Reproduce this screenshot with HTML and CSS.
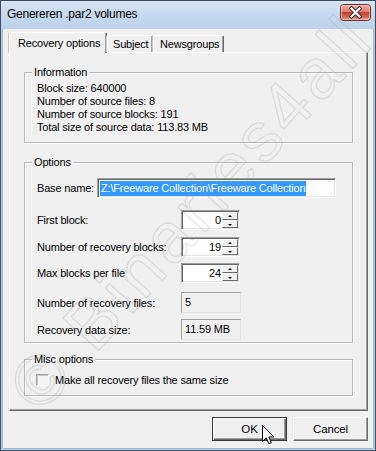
FILE: index.html
```html
<!DOCTYPE html>
<html>
<head>
<meta charset="utf-8">
<link rel="stylesheet" href="styles.css">
</head>
<body>
<div class="window">
  <div class="titlebar">
    <span class="title">Genereren .par2 volumes</span>
    <div class="close">
      <svg width="31" height="17" viewBox="0 0 31 17">
        <defs>
          <linearGradient id="cg" x1="0" y1="0" x2="0" y2="1">
            <stop offset="0" stop-color="#eab4a8"/>
            <stop offset="0.45" stop-color="#d9806f"/>
            <stop offset="0.5" stop-color="#c7402f"/>
            <stop offset="0.75" stop-color="#d2614f"/>
            <stop offset="1" stop-color="#e8a58f"/>
          </linearGradient>
        </defs>
        <rect x="0.5" y="0.5" width="30" height="16" rx="3" fill="url(#cg)" stroke="#6e2e2a"/>
        <rect x="1.5" y="1.5" width="28" height="14" rx="2" fill="none" stroke="#f3cfc6" stroke-opacity="0.7"/>
        <path d="M11.5 4.5 L19.5 12.5 M19.5 4.5 L11.5 12.5" stroke="#3b2a2e" stroke-width="4" stroke-linecap="square"/>
        <path d="M11.5 4.5 L19.5 12.5 M19.5 4.5 L11.5 12.5" stroke="#ffffff" stroke-width="2.2" stroke-linecap="square"/>
      </svg>
    </div>
  </div>
  <div class="client">
    <div class="tabs">
      <div class="tab active">Recovery options</div>
      <div class="tab tab-subject">Subject</div>
      <div class="tab tab-news">Newsgroups</div>
    </div>
    <div class="panel">
      <div class="group info">
        <span class="legend">Information</span>
        <div class="line">Block size: 640000</div>
        <div class="line">Number of source files: 8</div>
        <div class="line">Number of source blocks: 191</div>
        <div class="line">Total size of source data: 113.83 MB</div>
      </div>
      <div class="group options">
        <span class="legend">Options</span>
        <div class="row row-base">
          <span class="lbl lbl-short">Base name:</span>
          <div class="textbox"><span class="sel">Z:\Freeware Collection\Freeware Collection</span></div>
        </div>
        <div class="row row-first">
          <span class="lbl">First block:</span>
          <div class="spin"><div class="spin-val">0</div><div class="spin-btns"><div class="sb up"></div><div class="sb down"></div></div></div>
        </div>
        <div class="row row-rec">
          <span class="lbl">Number of recovery blocks:</span>
          <div class="spin"><div class="spin-val">19</div><div class="spin-btns"><div class="sb up"></div><div class="sb down"></div></div></div>
        </div>
        <div class="row row-max">
          <span class="lbl">Max blocks per file</span>
          <div class="spin"><div class="spin-val">24</div><div class="spin-btns"><div class="sb up"></div><div class="sb down"></div></div></div>
        </div>
        <div class="row row-files">
          <span class="lbl">Number of recovery files:</span>
          <div class="ro">5</div>
        </div>
        <div class="row row-size">
          <span class="lbl">Recovery data size:</span>
          <div class="ro">11.59 MB</div>
        </div>
      </div>
      <div class="group misc">
        <span class="legend">Misc options</span>
        <div class="check-row">
          <span class="checkbox"></span>
          <span>Make all recovery files the same size</span>
        </div>
      </div>
    </div>
    <div class="buttons">
      <div class="btn default">OK</div>
      <div class="btn">Cancel</div>
    </div>
  </div>
  <div class="watermark">© Binaries4all</div>
  <svg class="cursor" width="13" height="21" viewBox="0 0 13 21">
    <path d="M0.5 0.5 L0.5 16.5 L4.3 12.9 L6.8 18.8 L9.3 17.7 L6.9 12 L11.8 12 Z" fill="#fff" stroke="#000" stroke-width="1" stroke-linejoin="miter"/>
  </svg>
</div>
</body>
</html>
```

FILE: styles.css
```css
* { box-sizing: border-box; }
html, body { margin: 0; padding: 0; }
body {
  width: 376px;
  height: 451px;
  overflow: hidden;
  background: #fff;
  font-family: "Liberation Sans", Arial, sans-serif;
  font-size: 11px;
  letter-spacing: -0.17px;
  color: #000;
}
.window {
  position: relative;
  width: 376px;
  height: 451px;
  border: 1px solid #3c4c5e;
  background: linear-gradient(#c9dbef, #c0d5ec 60px, #bcd3eb);
  display: flex;
  flex-direction: column;
  overflow: hidden;
}
.titlebar {
  height: 28px;
  flex: none;
  display: flex;
  align-items: center;
  justify-content: space-between;
  padding: 0 4px 2px 6px;
  background: linear-gradient(#d6e4f3, #c6d9ee 50%, #bcd2ea);
}
.title {
  font-size: 12px;
  letter-spacing: -0.25px;
  color: #000;
}
.close {
  width: 31px;
  height: 17px;
  margin-top: -3px;
}
.close svg { display: block; }
.client {
  flex: 1;
  margin: 0 2px 2px 2px;
  background: #f0f0f0;
  padding: 3px 0 0 6px;
  box-shadow: -1px 0 0 #9eb3c8, 1px 0 0 #9eb3c8, 0 1px 0 #9eb3c8;
}
.tabs {
  display: flex;
  height: 20px;
  align-items: flex-end;
  position: relative;
  z-index: 2;
}
.tab {
  height: 17px;
  padding: 0 6px;
  display: flex;
  align-items: center;
  border: 1px solid;
  border-color: #fff #696969 transparent #fff;
  border-bottom: none;
  box-shadow: inset -1px 0 0 #a0a0a0, -1px 0 0 #c8c8c8;
  border-radius: 2px 2px 0 0;
  background: #f0f0f0;
  white-space: nowrap;
}
.tab.active {
  height: 21px;
  margin-bottom: -1px;
  width: 98px;
  padding-left: 8px;
  padding-bottom: 1px;
}
.tab-subject { width: 46px; padding-left: 5px; }
.tab-news { width: 71px; padding-left: 6px; }
.panel {
  width: 359px;
  height: 359px;
  border: 1px solid;
  border-color: #fff #696969 #696969 #fff;
  box-shadow: inset -1px -1px 0 #a0a0a0;
  padding: 19px 0 0 14px;
}
.group {
  position: relative;
  width: 329px;
  border: 1px solid #b8b8b8;
  box-shadow: inset 1px 1px 0 #fff, 1px 1px 0 #fff;
}
.legend {
  position: absolute;
  top: -8px;
  left: 7px;
  padding: 0 2px;
  background: #f0f0f0;
  line-height: 14px;
}
.info {
  height: 71px;
  padding: 9px 0 0 12px;
}
.line {
  height: 13px;
  line-height: 13px;
}
.options {
  height: 181px;
  margin-top: 19px;
  padding: 15px 0 0 12px;
}
.row {
  display: flex;
  align-items: center;
  height: 20px;
}
.row-first { margin-top: 12px; }
.row-rec { margin-top: 7px; }
.row-max { margin-top: 6px; }
.row-files { margin-top: 9px; height: 21px; }
.row-size { margin-top: 6px; height: 21px; }
.lbl {
  width: 144px;
  flex: none;
}
.lbl.lbl-short { width: 60px; }
.textbox {
  width: 239px;
  height: 20px;
  background: #fff;
  border: 1px solid;
  border-color: #a0a0a0 #fff #fff #a0a0a0;
  box-shadow: inset 1px 1px 0 #696969, inset -1px -1px 0 #e3e3e3;
  padding: 2px 0 0 2px;
  display: flex;
  align-items: flex-start;
}
.sel {
  background: #3399ff;
  color: #fff;
  height: 15px;
  line-height: 14px;
  padding: 0 1px;
  white-space: nowrap;
}
.spin {
  width: 59px;
  height: 20px;
  display: flex;
  border: 1px solid;
  border-color: #a0a0a0 #fff #fff #a0a0a0;
  box-shadow: inset 1px 1px 0 #696969, inset -1px -1px 0 #e3e3e3;
  background: #fff;
  padding: 1px 1px 1px 1px;
}
.spin-val {
  flex: 1;
  text-align: right;
  line-height: 17px;
  padding-right: 1px;
}
.spin-btns {
  width: 16px;
  display: flex;
  flex-direction: column;
}
.sb {
  flex: 1;
  position: relative;
  background: #f0f0f0;
  border: 1px solid;
  border-color: #fff #696969 #696969 #fff;
}
.sb::after {
  content: "";
  position: absolute;
  left: 5px;
  width: 0;
  height: 0;
  border-left: 2px solid transparent;
  border-right: 2px solid transparent;
}
.sb.up::after { top: 2px; border-bottom: 2px solid #000; }
.sb.down::after { top: 3px; border-top: 2px solid #000; }
.ro {
  width: 60px;
  height: 21px;
  border: 1px solid;
  border-color: #a0a0a0 #e3e3e3 #e3e3e3 #a0a0a0;
  background: #f0f0f0;
  line-height: 19px;
  padding-left: 3px;
}
.misc {
  height: 37px;
  margin-top: 16px;
  padding: 14px 0 0 11px;
}
.check-row {
  display: flex;
  align-items: center;
  gap: 6px;
  height: 12px;
}
.checkbox {
  width: 13px;
  height: 12px;
  border: 1px solid;
  border-color: #a0a0a0 #fff #fff #a0a0a0;
  box-shadow: inset 1px 1px 0 #c8c8c8;
  background: #f4f4f4;
}
.buttons {
  display: flex;
  justify-content: flex-end;
  gap: 6px;
  margin-top: 6px;
  padding-right: 5px;
}
.btn {
  width: 75px;
  height: 24px;
  display: flex;
  align-items: center;
  justify-content: center;
  background: #f0f0f0;
  border: 1px solid;
  border-color: #fff #696969 #696969 #fff;
  box-shadow: inset -1px -1px 0 #a0a0a0;
  font-size: 11.5px;
}
.btn.default {
  border: 1px solid #3a3a3a;
  box-shadow: inset 1px 1px 0 #fff, inset -1px -1px 0 #696969, inset -2px -2px 0 #a0a0a0;
}
.watermark {
  position: absolute;
  left: 22px;
  top: 398px;
  font-size: 70px;
  letter-spacing: 5px;
  white-space: nowrap;
  color: transparent;
  -webkit-text-stroke: 1.3px rgba(150, 150, 150, 0.24);
  transform-origin: 0 50%;
  transform: rotate(-48deg);
  line-height: 70px;
  margin-top: -35px;
  pointer-events: none;
  z-index: 5;
}
.cursor {
  position: absolute;
  left: 261px;
  top: 424px;
  z-index: 6;
}
```
